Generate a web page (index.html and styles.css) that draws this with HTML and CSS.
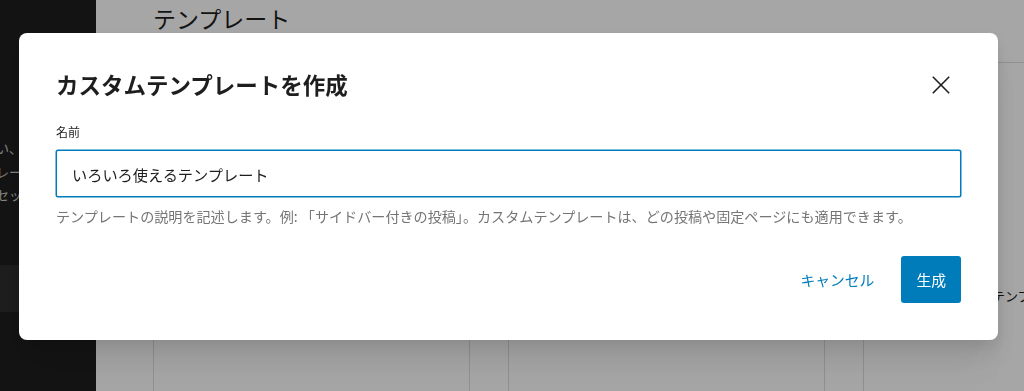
FILE: index.html
```html
<!DOCTYPE html>
<html lang="ja">
<head>
    <meta charset="UTF-8">
    <title>テンプレート</title>
    <link rel="stylesheet" href="styles.css">
</head>
<body>
<div class="app">
    <aside class="sidebar">
        <div class="sidebar-desc">
            さい、<br>
            プレート<br>
            をセット
        </div>
        <div class="sidebar-item"></div>
    </aside>
    <main class="content">
        <header class="content-header">
            <h1>テンプレート</h1>
        </header>
        <div class="grid">
            <div class="card">
                <div class="card-preview"></div>
                <div class="card-title">ブログのホーム</div>
            </div>
            <div class="card">
                <div class="card-preview"></div>
                <div class="card-title">単一投稿</div>
            </div>
            <div class="card">
                <div class="card-preview"></div>
                <div class="card-title">全幅レイアウトのテンプレート</div>
            </div>
        </div>
    </main>
</div>

<div class="overlay">
    <div class="modal">
        <div class="modal-header">
            <h2>カスタムテンプレートを作成</h2>
            <button class="close" aria-label="閉じる">
                <svg width="18" height="18" viewBox="0 0 18 18">
                    <line x1="0.8" y1="0.8" x2="17.2" y2="17.2"/>
                    <line x1="17.2" y1="0.8" x2="0.8" y2="17.2"/>
                </svg>
            </button>
        </div>
        <label class="field-label" for="tpl-name">名前</label>
        <input class="field-input" id="tpl-name" type="text" value="いろいろ使えるテンプレート">
        <p class="help">テンプレートの説明を記述します。例: 「サイドバー付きの投稿」。カスタムテンプレートは、どの投稿や固定ページにも適用できます。</p>
        <div class="actions">
            <button class="btn btn-link">キャンセル</button>
            <button class="btn btn-primary">生成</button>
        </div>
    </div>
</div>
</body>
</html>
```

FILE: styles.css
```css
* {
    margin: 0;
    padding: 0;
    box-sizing: border-box;
}
body {
    height: 391px;
    overflow: hidden;
    font-family: "Noto Sans CJK JP", "Noto Sans", sans-serif;
    color: #1e1e1e;
    background-color: #fff;
}
.app {
    display: flex;
    height: 391px;
}

/* sidebar */
.sidebar {
    width: 96px;
    flex-shrink: 0;
    background-color: #1e1e1e;
    overflow: hidden;
}
.sidebar-desc {
    margin-top: 136px;
    margin-left: -17px;
    width: 200px;
    font-size: 13px;
    line-height: 23.5px;
    color: #ccc;
    white-space: nowrap;
}
.sidebar-item {
    margin-top: 58px;
    height: 47px;
    background-color: #2d2d2d;
}

/* content */
.content {
    flex: 1;
    background-color: #fff;
    overflow: hidden;
}
.content-header {
    height: 63px;
    padding: 2px 0 0 57px;
    border-bottom: 1px solid #ddd;
}
.content-header h1 {
    font-size: 23px;
    font-weight: 400;
    line-height: 32px;
}
.grid {
    display: grid;
    grid-template-columns: repeat(3, 317px);
    gap: 38px;
    padding-left: 57px;
}
.card {
    height: 400px;
    border: 1px solid #ddd;
    border-top: none;
}
.card-preview {
    height: 216px;
}
.card-title {
    padding: 7px 0 0 24px;
    font-size: 13px;
    line-height: 20px;
    white-space: nowrap;
}

/* modal */
.overlay {
    position: fixed;
    top: 0;
    left: 0;
    right: 0;
    bottom: 0;
    padding: 33px 0 0 19px;
    background-color: rgba(0, 0, 0, 0.35);
}
.modal {
    width: 979px;
    padding: 37px;
    background-color: #fff;
    border-radius: 8px;
    box-shadow: 0 5px 15px rgba(0, 0, 0, 0.08), 0 15px 27px rgba(0, 0, 0, 0.07), 0 30px 36px rgba(0, 0, 0, 0.04), 0 50px 43px rgba(0, 0, 0, 0.02);
}
.modal-header {
    display: flex;
    align-items: center;
    justify-content: space-between;
    height: 28px;
}
.modal-header h2 {
    font-size: 22.5px;
    font-weight: 700;
    line-height: 28px;
}
.close {
    width: 40px;
    height: 40px;
    margin-top: 2px;
    display: flex;
    align-items: center;
    justify-content: center;
    background: none;
    border: none;
}
.close svg line {
    stroke: #1e1e1e;
    stroke-width: 1.6;
}
.field-label {
    display: block;
    margin-top: 26px;
    font-size: 12px;
    line-height: 16px;
    color: #1e1e1e;
}
.field-input {
    display: block;
    width: 100%;
    height: 47px;
    margin-top: 10px;
    padding: 0 15px;
    font-family: inherit;
    font-size: 15.2px;
    color: #1e1e1e;
    border: 1px solid #007cba;
    box-shadow: 0 0 0 0.5px #007cba;
    border-radius: 2px;
    outline: none;
}
.help {
    margin-top: 9px;
    font-size: 14.1px;
    line-height: 20px;
    color: #757575;
    white-space: nowrap;
}
.actions {
    display: flex;
    justify-content: flex-end;
    gap: 12px;
    margin-top: 30px;
}
.btn {
    height: 47px;
    padding: 0 15px;
    font-family: inherit;
    font-size: 14.8px;
    border: none;
    border-radius: 3px;
    background: none;
}
.btn-link {
    color: #007cba;
}
.btn-primary {
    color: #fff;
    background-color: #007cba;
}
```
